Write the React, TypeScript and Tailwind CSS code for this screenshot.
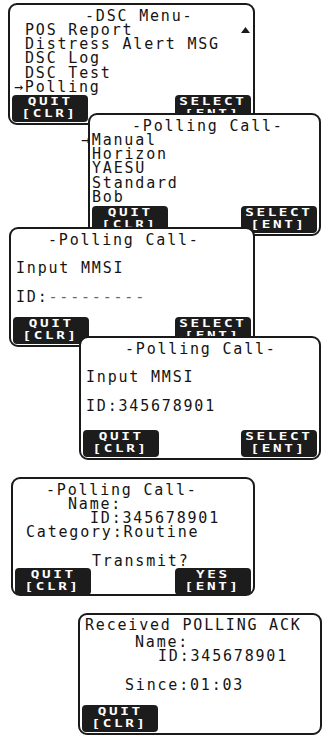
import React from "react";

type KeyProps = { top: string; bottom: string };

const Key: React.FC<KeyProps> = ({ top, bottom }) => {
    return (
        <div className="flex h-[27px] w-[76px] flex-col items-center rounded-[4px] bg-[#1c1c1c] pt-[1px] text-[11px] font-bold leading-[11.5px] text-white">
            <span className="inline-block scale-x-[1.3] tracking-[2px]">{top}</span>
            <span className="inline-block scale-x-[1.3] tracking-[2px]">{bottom}</span>
        </div>
    );
};

type ScreenProps = {
    className: string;
    children: React.ReactNode;
    left?: KeyProps;
    right?: KeyProps;
};

// one LCD page of the radio
const Screen: React.FC<ScreenProps> = ({ className, children, left, right }) => {
    return (
        <div className={"relative flex flex-col rounded-[9px] border-2 border-[#1a1a1a] bg-white " + className}>
            <div className="flex flex-col">{children}</div>
            <div className="mt-auto flex justify-between px-[2px] pb-[1px]">
                {left ? <Key {...left} /> : <span />}
                {right ? <Key {...right} /> : <span />}
            </div>
        </div>
    );
};

const quit = { top: "QUIT", bottom: "[CLR]" };
const select = { top: "SELECT", bottom: "[ENT]" };

const App: React.FC = () => {
    return (
        <div className="flex h-[736px] w-[325px] flex-col overflow-hidden bg-white font-['DejaVu_Sans_Mono',monospace] text-[15px] leading-[14.2px] tracking-[1.8px] text-[#141414]">
            {/* DSC menu */}
            <Screen className="ml-[8px] mt-[3px] h-[122px] w-[247px] pt-[5px]" left={quit} right={select}>
                <div className="ml-[75px] leading-[13px]">-DSC Menu-</div>
                <div className="flex justify-between pl-[15px] pr-[3px]">
                    <span>POS Report</span>
                    <svg width="9" height="6" viewBox="0 0 9 6" className="mt-[4px]">
                        <polygon points="4.5,0 9,6 0,6" fill="#1a1a1a" />
                    </svg>
                </div>
                <div className="pl-[15px]">Distress Alert MSG</div>
                <div className="pl-[15px]">DSC Log</div>
                <div className="pl-[15px]">DSC Test</div>
                <div className="pl-[4px]">→Polling</div>
            </Screen>

            {/* polling call list */}
            <Screen className="-mt-[12px] ml-[88px] h-[123px] w-[233px] pt-[5px]" left={quit} right={select}>
                <div className="ml-[42px] leading-[13px]">-Polling Call-</div>
                <div className="-ml-[9px]">→Manual</div>
                <div className="ml-[2px]">Horizon</div>
                <div className="ml-[2px]">YAESU</div>
                <div className="ml-[2px]">Standard</div>
                <div className="ml-[2px]">Bob</div>
            </Screen>

            {/* manual input, empty */}
            <Screen className="-mt-[9px] ml-[9px] h-[120px] w-[246px] pt-[5px]" left={quit} right={select}>
                <div className="ml-[37px] leading-[13px]">-Polling Call-</div>
                <div className="h-[14.2px]" />
                <div className="ml-[5px]">Input MMSI</div>
                <div className="h-[14.2px]" />
                <div className="ml-[5px]">
                    ID:<span className="text-[#6a6a6a]">---------</span>
                </div>
            </Screen>

            {/* manual input, filled */}
            <Screen className="-mt-[11px] ml-[79px] h-[124px] w-[242px] pt-[5px]" left={quit} right={select}>
                <div className="ml-[44px] leading-[13px]">-Polling Call-</div>
                <div className="h-[14.2px]" />
                <div className="ml-[5px]">Input MMSI</div>
                <div className="h-[14.2px]" />
                <div className="ml-[5px]">ID:345678901</div>
            </Screen>

            {/* confirm */}
            <Screen className="ml-[11px] mt-[17px] h-[119px] w-[244px] pt-[5px]" left={quit} right={{ top: "YES", bottom: "[ENT]" }}>
                <div className="ml-[33px] leading-[13px]">-Polling Call-</div>
                <div className="ml-[55px]">Name:</div>
                <div className="ml-[77px]">ID:345678901</div>
                <div className="ml-[13px]">Category:Routine</div>
                <div className="h-[14.2px]" />
                <div className="ml-[79px]">Transmit?</div>
            </Screen>

            {/* ack received */}
            <Screen className="ml-[78px] mt-[17px] h-[122px] w-[244px] pt-[4px]" left={quit}>
                <div className="ml-[5px] leading-[13px]">Received POLLING ACK</div>
                <div className="ml-[55px] mt-[3px]">Name:</div>
                <div className="ml-[78px]">ID:345678901</div>
                <div className="h-[14.2px]" />
                <div className="ml-[45px]">Since:01:03</div>
            </Screen>
        </div>
    );
};

export default App;
